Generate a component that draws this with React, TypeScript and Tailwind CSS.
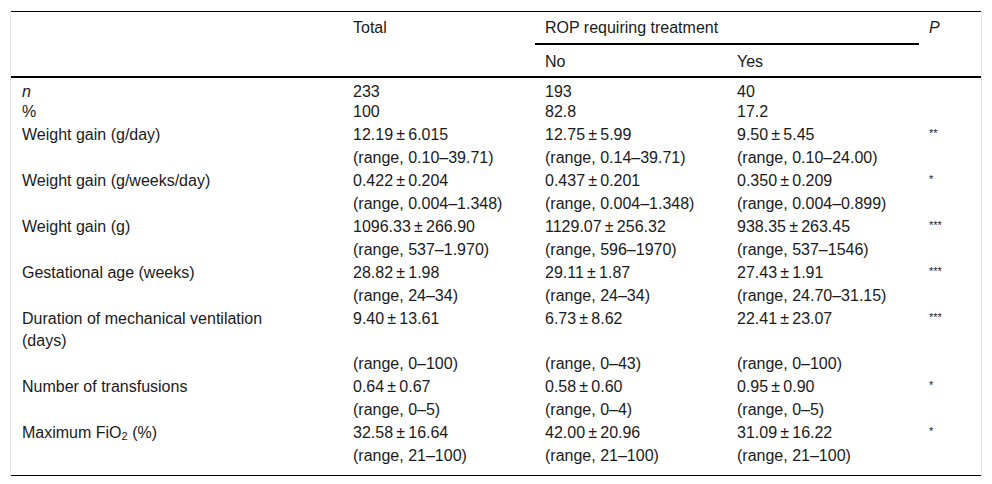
import React from "react";

type Row = { label: React.ReactNode; total: string; no: string; yes: string; p?: string };

const rows: Row[] = [
  { label: "Weight gain (g/day)", total: "12.19\u2009±\u20096.015", no: "12.75\u2009±\u20095.99", yes: "9.50\u2009±\u20095.45", p: "**" },
  { label: "", total: "(range, 0.10–39.71)", no: "(range, 0.14–39.71)", yes: "(range, 0.10–24.00)" },
  { label: "Weight gain (g/weeks/day)", total: "0.422\u2009±\u20090.204", no: "0.437\u2009±\u20090.201", yes: "0.350\u2009±\u20090.209", p: "*" },
  { label: "", total: "(range, 0.004–1.348)", no: "(range, 0.004–1.348)", yes: "(range, 0.004–0.899)" },
  { label: "Weight gain (g)", total: "1096.33\u2009±\u2009266.90", no: "1129.07\u2009±\u2009256.32", yes: "938.35\u2009±\u2009263.45", p: "***" },
  { label: "", total: "(range, 537–1.970)", no: "(range, 596–1970)", yes: "(range, 537–1546)" },
  { label: "Gestational age (weeks)", total: "28.82\u2009±\u20091.98", no: "29.11\u2009±\u20091.87", yes: "27.43\u2009±\u20091.91", p: "***" },
  { label: "", total: "(range, 24–34)", no: "(range, 24–34)", yes: "(range, 24.70–31.15)" },
  { label: "Duration of mechanical ventilation (days)", total: "9.40\u2009±\u200913.61", no: "6.73\u2009±\u20098.62", yes: "22.41\u2009±\u200923.07", p: "***" },
  { label: "", total: "(range, 0–100)", no: "(range, 0–43)", yes: "(range, 0–100)" },
  { label: "Number of transfusions", total: "0.64\u2009±\u20090.67", no: "0.58\u2009±\u20090.60", yes: "0.95\u2009±\u20090.90", p: "*" },
  { label: "", total: "(range, 0–5)", no: "(range, 0–4)", yes: "(range, 0–5)" },
  {
    label: (
      <>
        Maximum FiO<sub className="text-[11px] leading-none relative top-[2px]">2</sub> (%)
      </>
    ),
    total: "32.58\u2009±\u200916.64",
    no: "42.00\u2009±\u200920.96",
    yes: "31.09\u2009±\u200916.22",
    p: "*",
  },
  { label: "", total: "(range, 21–100)", no: "(range, 21–100)", yes: "(range, 21–100)" },
];

export default function App() {
  return (
    <div
      className="w-[992px] h-[484px] bg-white pt-[11px] pl-[10px] text-[16px] leading-[22px] text-[#1a1a1a]"
      style={{ fontFamily: '"Liberation Sans", Arial, sans-serif' }}
    >
      <div className="w-[972px] border-x border-[#e6e6e6]">
        <table className="w-[970px] table-fixed border-collapse">
          <colgroup>
            <col className="w-[332px]" />
            <col className="w-[192px]" />
            <col className="w-[192px]" />
            <col className="w-[192px]" />
            <col className="w-[62px]" />
          </colgroup>
          <thead>
            <tr className="border-t border-black">
              <th rowSpan={2} className="border-b-2 border-black"></th>
              <th rowSpan={2} className="align-top text-left font-normal pl-[10px] pt-[5px] border-b-2 border-black">
                Total
              </th>
              <th colSpan={2} className="align-top text-left font-normal pl-[10px] pt-[5px] pb-[4px] border-b-2 border-black">
                ROP requiring treatment
              </th>
              <th rowSpan={2} className="align-top text-left font-normal pl-[10px] pt-[5px] italic border-b-2 border-black">
                P
              </th>
            </tr>
            <tr className="border-b-2 border-black">
              <th className="align-top text-left font-normal pl-[10px] pt-[6px] pb-[3px]">No</th>
              <th className="align-top text-left font-normal pl-[10px] pt-[6px] pb-[3px]">Yes</th>
            </tr>
          </thead>
          <tbody>
            <tr>
              <td className="pl-[11px] pt-[3px] align-top italic">n</td>
              <td className="pl-[10px] pt-[3px] align-top">233</td>
              <td className="pl-[10px] pt-[3px] align-top">193</td>
              <td className="pl-[10px] pt-[3px] align-top">40</td>
              <td></td>
            </tr>
            <tr>
              <td className="pl-[11px] pb-[2px] leading-[18px] align-top">%</td>
              <td className="pl-[10px] pb-[2px] leading-[18px] align-top">100</td>
              <td className="pl-[10px] pb-[2px] leading-[18px] align-top">82.8</td>
              <td className="pl-[10px] pb-[2px] leading-[18px] align-top">17.2</td>
              <td></td>
            </tr>
            {rows.map((r, i) => {
              const last = i === rows.length - 1;
              const pad = last ? "pt-[1px] pb-[8px]" : "pt-[1px]";
              return (
                <tr key={i} className={last ? "border-b border-black" : ""}>
                  <td className={`pl-[11px] pr-[50px] align-top ${pad}`}>{r.label}</td>
                  <td className={`pl-[10px] align-top ${pad}`}>{r.total}</td>
                  <td className={`pl-[10px] align-top ${pad}`}>{r.no}</td>
                  <td className={`pl-[10px] align-top ${pad}`}>{r.yes}</td>
                  <td className={`pl-[10px] align-top text-[11px] leading-[18px] ${pad}`}>{r.p ?? ""}</td>
                </tr>
              );
            })}
          </tbody>
        </table>
      </div>
    </div>
  );
}
